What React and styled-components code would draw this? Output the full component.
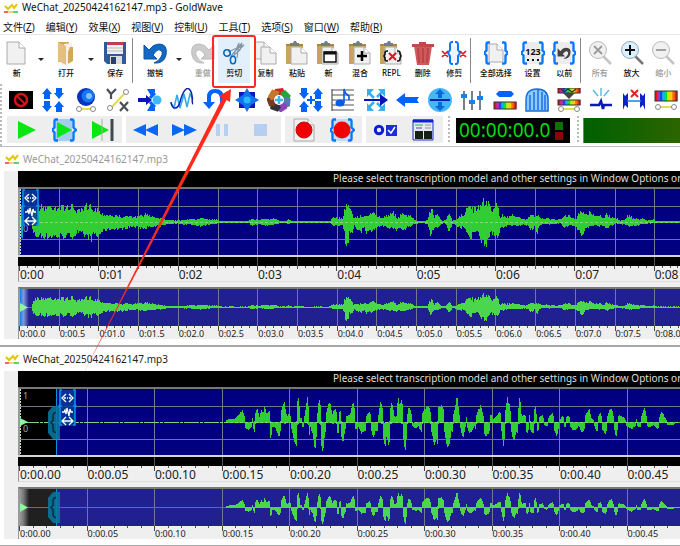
import React from "react";
import styled, { createGlobalStyle } from "styled-components";

const Global = createGlobalStyle`
  * { box-sizing: border-box; }
  body { margin: 0; background: #fff; overflow: hidden; }
  button { font: inherit; color: inherit; border: 0; padding: 0; background: none; }
  svg { display: block; flex: none; }
`;

const Page = styled.main`
  position: relative;
  overflow: hidden;
  font-family: "Noto Sans", "Noto Sans CJK SC", sans-serif;
  color: #111;
`;
const TitleBar = styled.header`
  display: flex;
  align-items: center;
  gap: 4px;
  height: 15px;
  padding-left: 4px;
  font-size: 10px;
  line-height: 15px;
  white-space: nowrap;
`;
const MenuBar = styled.nav`
  display: flex;
  align-items: center;
  gap: 11px;
  height: 20px;
  padding: 4px 3px 0;
  border-bottom: 1px solid #e6e6e6;
  font-size: 10px;
  line-height: 14px;
`;
const MenuItem = styled.button`
  white-space: nowrap;
`;
const MainTools = styled.div`
  display: flex;
  height: 49px;
  padding-top: 3px;
`;
const ToolGroup = styled.div`
  display: flex;
  flex: none;
  width: ${(p) => p.$width}px;
  padding-left: ${(p) => p.$inset || 0}px;
`;
const ToolButton = styled.button`
  display: flex;
  flex: 1 0 ${(p) => (p.$wide ? 10 : 0)}px;
  flex-direction: column;
  align-items: center;
  gap: 1px;
  height: 45px;
  padding-top: 3px;
  font-size: 8px;
  font-weight: 500;
  line-height: 13px;
  white-space: nowrap;
  color: ${(p) => (p.disabled ? "#999" : "#111")};
  background: ${(p) => (p.$active ? "#e3effa" : "transparent")};
`;
const DropArrow = styled.button`
  flex: none;
  display: flex;
  justify-content: center;
  align-items: center;
  width: 16px;
  height: 43px;
`;
const Divider = styled.span`
  flex: none;
  width: 1px;
  height: 45px;
  background: #888;
`;
const LowerTools = styled.div`
  padding-left: 5px;
  background: radial-gradient(circle at 1px 1px, #bbb 1px, transparent 1px) 0 0 / 4px 4px repeat-y;
`;
const EffectRow = styled.div`
  display: flex;
  height: 31px;
  margin-right: -2px;
`;
const IconButton = styled.button`
  flex: 1 0 0;
  display: flex;
  align-items: center;
  justify-content: center;
`;
const TransportRow = styled.div`
  display: flex;
  gap: 4px;
  height: 31px;
  padding: 1px 0 3px 2px;
`;
const TransportPanel = styled.div`
  flex: none;
  display: flex;
  width: ${(p) => p.$width}px;
  background: #eee;
`;
const Grip = styled.span`
  flex: none;
  width: 5px;
  margin-left: ${(p) => p.$gap}px;
  background: radial-gradient(circle at 1px 1px, #bbb 1px, transparent 1px) 1px 0 / 4px 4px repeat-y;
`;
const Lcd = styled.div`
  flex: none;
  display: flex;
  align-items: center;
  justify-content: space-between;
  width: 114px;
  height: 25px;
  margin-top: 2px;
  padding: 0 7px 0 3px;
  background: #000;
  color: #00dc14;
  font-size: 19px;
  line-height: 25px;
`;
const Lamps = styled.div`
  display: grid;
  gap: 2px;
`;
const Lamp = styled.span`
  width: 8px;
  height: 8px;
  background: ${(p) => p.$color};
`;
const Meter = styled.div`
  flex: 1;
  height: 25px;
  margin-top: 2px;
  margin-left: -2px;
  border-left: 1px solid #19c719;
  background: linear-gradient(90deg, #006000, #2c6500);
`;
const SoundWindow = styled.section`
  padding-bottom: 6px;
  border-top: ${(p) => p.$rule}px solid ${(p) => (p.$rule > 1 ? "#a6a6a6" : "#bcbcbc")};
`;
const WindowTitle = styled.h2`
  display: flex;
  align-items: center;
  gap: 4px;
  height: 24px;
  margin: 0;
  padding-left: 5px;
  font-size: 10px;
  font-weight: 400;
  line-height: 24px;
  color: ${(p) => (p.$dim ? "#999" : "#222")};
`;
const Tracks = styled.div`
  margin-left: 4px;
  padding-left: 14px;
  background: #efefef;
`;
const Transcript = styled.p`
  margin: 0;
  height: 16px;
  padding-left: 315px;
  overflow: hidden;
  background: #000;
  color: #ddd;
  font-size: 10px;
  line-height: 15px;
  white-space: nowrap;
`;
const Strip = styled.div`
  position: relative;
  border-top: 2px solid #777;
  border-left: 2px solid #999;
  background: #000;
  overflow: hidden;
`;
const Floating = styled.div`
  position: absolute;
  top: 0;
  left: 0;
`;
const WaveBase = styled.div`
  height: ${(p) => p.$height}px;
  border-top: 2px solid #d4d4d4;
  background: #000;
  overflow: hidden;
`;
const Ruler = styled.div`
  height: ${(p) => p.$height}px;
  overflow: hidden;
  border-left: 1px solid #999;
  border-bottom: ${(p) => (p.$small ? 0 : 1)}px solid #ddd;
`;
const RulerScale = styled.div`
  display: grid;
  grid-template-columns: repeat(${(p) => p.$count}, 1fr);
  width: calc(100% + ${(p) => p.$extra}px);
  font-size: ${(p) => (p.$small ? 9 : 12)}px;
  line-height: ${(p) => (p.$small ? 10 : 14)}px;
  color: #222;
`;
const RulerCell = styled.div`
  display: grid;
  grid-template-rows: 3px auto;
  height: ${(p) => (p.$small ? 13 : 16)}px;
  white-space: nowrap;
  background: linear-gradient(#444, #444) 0 0 / 1px 5px no-repeat;
`;
const TickRow = styled.span`
  display: grid;
  grid-template-columns: repeat(${(p) => p.$count}, 1fr);
`;
const Tick = styled.span`
  height: ${(p) => (p.$mid ? 3 : 2)}px;
  border-left: ${(p) => (p.$first ? 0 : 1)}px solid #555;
`;
const RulerLabel = styled.span`
  padding-left: 1px;
  margin-top: ${(p) => (p.$small ? 0 : -1)}px;
`;
const Spacer = styled.div`
  height: 5px;
`;
const BottomRule = styled.div`
  height: 2px;
  background: #aaa;
`;
const Annotation = styled.svg`
  position: absolute;
  top: 0;
  left: 0;
  pointer-events: none;
`;

const B = "#0879ff";
const Svg = ({ w = 24, h = 24, children, ...p }) => (
  <svg width={w} height={h} viewBox={`0 0 ${w} ${h}`} fill="none" aria-hidden="true" {...p}>{children}</svg>
);
const Logo = () => (
  <Svg w={14} h={10}>
    <path d="M1 3l3 3 4-4 2 3 3-4" stroke="#e3c600" strokeWidth="2" />
    <path d="M0 9h4" stroke="#e33" strokeWidth="1.5" /><path d="M4 9h5" stroke="#e8a020" strokeWidth="1" /><path d="M9 9h5" stroke="#2c3" strokeWidth="1.5" />
  </Svg>
);
const Sheet = ({ x = 2, y = 1, w = 18, h = 22 }) => (
  <>
    <path d={`M${x} ${y}h${w - 6}l6 6v${h - 6}h-${w}z`} fill="#f1f1f1" stroke="#aaa" />
    <path d={`M${x + w - 6} ${y}v6h6`} fill="#fff" stroke="#aaa" />
  </>
);
const Braces = ({ l = 4, r = 20 }) => (
  <g stroke={B} strokeWidth="2.4">
    <path d={`M${l + 2} 1.500h-2q-1.500 0-1.500 2v6l-2.500 2.500 2.500 2.500v6q0 2 1.500 2h2`} />
    <path d={`M${r - 2} 1.500h2q1.500 0 1.500 2v6l2.500 2.500-2.500 2.500v6q0 2-1.500 2h-2`} />
  </g>
);
const Clip = ({ children }) => (
  <>
    <path d="M1 3h17v20H1z" fill="#c9a45c" /><path d="M1 3h17v2H1z" fill="#b0843c" />
    <path d="M5 4V2h3l1-2h2l1 2h2v3H5z" fill="#777c82" />
    <Sheet x={6} y={6} w={16} h={17} />
    {children}
  </>
);
const Lens = ({ dim, children }) => (
  <>
    <path d="M15 15l8 8" stroke={dim ? "#c4c4c4" : "#777"} strokeWidth="2.500" />
    <circle cx="10" cy="9" r="8.500" fill={dim ? "#f0f0f0" : "#d9f0ff"} stroke={dim ? "#bbb" : "#96a8b4"} />
    {children}
  </>
);
const undoShape = "M1 4v14h13l-4-4q4-6 7-5 4 2 1 7-2 4-7 6 10 1 12-8Q25 3 16 3q-6 0-10 6z";
const mainIcons = {
  file: <Svg><Sheet x={2} /></Svg>,
  open: <Svg w={20}><path d="M2 1h11v20H2z" fill="#d6a454" /><path d="M8 3l8-1v19l-8 2z" fill="#f2f0e8" /><path d="M2 1l8 4v19l-8-4z" fill="#e5c078" /><path d="M14 6h3v14l-5 3V11z" fill="#d5a75b" /></Svg>,
  save: <Svg><path d="M1 1h22v22H4l-3-3z" fill="#315a9e" /><path d="M4 1h16v12H4z" fill="#edf1f5" /><path d="M4 1h16v3H4z" fill="#c13f49" /><path d="M4 7h16M4 10h16" stroke="#bbb" /><path d="M7 15h12v8H7z" fill="#ddd" /><path d="M8 16h5v7H8z" fill="#27416b" /></Svg>,
  undo: <Svg><path d={undoShape} fill="#1268c5" stroke="#10529a" /></Svg>,
  redo: <Svg><path d={undoShape} transform="matrix(-1 0 0 1 24 0)" fill="#ccc" stroke="#bbb" /></Svg>,
  cut: <Svg><path d="M9 15L20 2l-2 7-8 7zM15 17l2-15-5 11M6 11L22 4l-7 7" stroke="#8297a8" strokeWidth="1.200" /><circle cx="5" cy="12" r="3.200" stroke="#0a68b9" strokeWidth="1.600" /><ellipse cx="11" cy="19" rx="2.600" ry="3.800" stroke="#0a68b9" strokeWidth="1.600" /></Svg>,
  copy: <Svg><Sheet x={1} y={1} w={15} h={17} /><Sheet x={7} y={6} w={15} h={17} /></Svg>,
  paste: <Svg><Clip /></Svg>,
  pasteNew: <Svg><Clip><path d="M8 11h12v10H8z" fill="#fff" stroke="#111" strokeWidth="1.500" /><path d="M8 12h12" stroke="#111" strokeWidth="3" /></Clip></Svg>,
  mix: <Svg><Clip><path d="M9 15h10M14 10v10" stroke="#000" strokeWidth="2.500" /></Clip></Svg>,
  repl: <Svg><Clip><path d="M9 10H8q-2 0-2 2v1l-1 2 1 2v1q0 2 2 2h1M18 10h1q2 0 2 2v1l1 2-1 2v1q0 2-2 2h-1" stroke="#111" strokeWidth="1.600" /><path d="M10 12l7 7M17 12l-7 7" stroke="#d51920" strokeWidth="2" /></Clip></Svg>,
  trash: <Svg><path d="M3 5h18l-3 19H6z" fill="#cf5a5a" /><path d="M7 7l1 15M12 7v15M17 7l-1 15" stroke="#bd434a" strokeWidth="2" /><path d="M1 3h7V1h7v2h8v3H1z" fill="#c1484d" /></Svg>,
  trim: <Svg w={26}><path d="M10 5h6v15h-6z" fill="#eaf5ff" /><g stroke={B} strokeWidth="2"><path d="M12 1h-1q-2 0-2 3v5l-2 3 2 3v5q0 3 2 3h1M14 1h1q2 0 2 3v5l2 3-2 3v5q0 3-2 3h-1" /></g><path d="M1 10l6 6M7 10l-6 6M19 10l6 6M25 10l-6 6" stroke="#e01a1f" strokeWidth="1.700" /></Svg>,
  all: <Svg><Braces /><Sheet x={5} y={3} w={14} h={18} /></Svg>,
  numbers: <Svg><rect x="4" y="1" width="16" height="22" fill="#ececec" /><Braces /><text x="12" y="14" textAnchor="middle" fontFamily="Noto Sans" fontSize="9" fontWeight="700" fill="#111">123</text><path d="M6 19h2m3 0h2m3 0h2" stroke="#111" strokeWidth="2" /></Svg>,
  previous: <Svg><rect x="4" y="1" width="16" height="22" fill="#ececec" /><Braces /><path d={undoShape} transform="translate(5 5) scale(.58)" fill="#444" /></Svg>,
  zoomAll: <Svg><Lens dim><path d="M6 5l8 8M14 5l-8 8" stroke="#999" strokeWidth="1.800" /></Lens></Svg>,
  zoomIn: <Svg><Lens><path d="M5 9h10M10 4v10" stroke="#111" strokeWidth="2" /></Lens></Svg>,
  zoomOut: <Svg><Lens dim><path d="M5 9h10" stroke="#999" strokeWidth="1.800" /></Lens></Svg>,
};

const E = "#0064fa";
const arrowUp = "M5 0l5 6H8v5H2V6H0z";
const Arrow = ({ x, y, r = 0, c = E }) => <path d={arrowUp} fill={c} transform={`translate(${x} ${y}) rotate(${r} 5 5.500)`} />;
const Rainbow = ({ x = 1, y, w = 22, h = 7 }) => (
  <>{["#e11", "#a3c", "#24e", "#0bd", "#1d3", "#be0", "#fc0", "#f70", "#e22"].map((c, i) => <rect key={i} x={x + (i * w) / 9} y={y} width={w / 9 + 0.5} height={h} fill={c} />)}<rect x={x} y={y} width={w} height={h} stroke="#333" /></>
);
const Link = ({ y = 21, x1 = 4, x2 = 20 }) => (
  <><path d={`M${x1} ${y}H${x2}`} stroke="#e4dc52" strokeWidth="2" /><g fill="#fff" stroke="#888"><circle cx={x1} cy={y} r="2.500" /><circle cx={x2} cy={y} r="2.500" /></g></>
);
const effects = [
  ["Censor", <><path d="M0 3h24v18H0z" fill="#000" /><circle cx="12" cy="12" r="6" stroke="#d21313" strokeWidth="2.500" /><path d="M8 8l8 8" stroke="#d21313" strokeWidth="2" /></>],
  ["Stretch", <><Arrow x={1} y={0} /><Arrow x={13} y={0} r={180} /><Arrow x={1} y={13} r={180} /><Arrow x={13} y={13} /></>],
  ["Doppler", <><circle cx="12" cy="9" r="9" fill="#0632c0" /><circle cx="14" cy="8" r="6.500" fill="#1675f0" /><circle cx="15" cy="8" r="3" fill="#7dc3ff" /><Link x1={5} x2={19} /></>],
  ["Expression", <><path d="M5 20L19 5" stroke="#e4dc52" strokeWidth="2" /><g stroke="#4b5058" strokeWidth="2.200"><path d="M1 1l4 5 5-5M5 6v5M14 14l8 9M22 14l-8 9" /></g><g fill="#fff" stroke="#888"><circle cx="20" cy="4" r="2.500" /><circle cx="4" cy="20" r="2.500" /></g></>],
  ["Echo", <><circle cx="19" cy="12" r="4.500" fill="#3db8f8" /><path d="M12 10l5-5M12 14l5 5" stroke={E} strokeWidth="3" /><path d="M9 1h8v3l-4 4zM9 23h8v-3l-4-4z" fill={E} /><path d="M0 10h8V7l6 5-6 5v-3H0z" fill="#0b12bd" /></>],
  ["Flanger", <><path d="M1 15l3 5 3-13 3 13 4-14 3 13 3-13 3 5" stroke="#37a8f0" strokeWidth="1.600" /><path d="M1 14c1 8 7 8 9 0S16-3 20 2s1 13 3 14" stroke="#0922ad" strokeWidth="1.500" /></>],
  ["Reverse", <path d="M0 14h4V9q0-8 8-8 9 0 9 9v4q0 7-6 9 2-3 2-8v-4q0-6-5-6-4 0-4 5v4h4l-6 7z" fill={E} />],
  ["Mechanize", <><path d="M4 4h16v16H4z" fill="#0b18bf" /><path d="M12 0l4 7 8 5-8 5-4 7-4-7-8-5 8-5z" fill="#1171ee" /><circle cx="12" cy="12" r="3.500" fill="#29b9f4" /></>],
  ["Plug-ins", <>{["#d42226", "#24a637", "#5878b6", "#8a45b6", "#333", "#773a23", "#c67829"].map((c, i) => <path key={c} d="M8 1l8-1 3 7-6 3-6-4z" fill={c} transform={`rotate(${i * 51.4} 12 12)`} />)}<circle cx="12" cy="12" r="5" fill="#fff" /><path d="M12 8v8M8 12h8" stroke="#40b4ed" strokeWidth="2.500" /></>],
  ["Offset", <><Arrow x={0} y={0} r={180} /><Arrow x={14} y={0} /><Arrow x={0} y={13} /><Arrow x={14} y={13} r={180} /><path d="M8 12h8M12 8v8" stroke={E} strokeWidth="2" /></>],
  ["Pitch", <><path d="M1 2h22M1 7h22M1 12h22M1 17h22M1 22h22M1 1v22" stroke="#555" strokeWidth="1.200" /><ellipse cx="9" cy="15" rx="4.500" ry="3.500" fill="#075de9" /><path d="M13 15V1q1 5 5 7v4" stroke="#075de9" strokeWidth="1.600" /></>],
  ["Reverb", <><path d="M10 10L5 5m8 4l5-5m-8 10l-5 5m8-4l5 5" stroke="#38afee" strokeWidth="2.500" /><path d="M3 1h7L3 9zM21 1h-7l7 8zM3 23h7l-7-8zM21 23h-7l7-8z" fill="#38afee" /><path d="M0 11h16V6l8 6-8 6v-5H0z" fill="#0912bb" /></>],
  ["Backward", <path d="M0 12l9-7v4h14l-2 3 2 3H9v4z" fill={E} />],
  ["Dynamics", <><circle cx="12" cy="12" r="12" fill="#45b8f4" /><path d="M2 12h20" stroke="#0821aa" strokeWidth="2" /><path d="M12 1l5 5h-3v4h-4V6H7zM12 23l5-5h-3v-4h-4v4H7z" fill="#0568dd" /></>],
  ["Equalizer", <><path d="M4 3v19M12 3v19M20 3v19" stroke="#536371" strokeWidth="1.600" /><path d="M1 8h6M9 14h6M17 10h6" stroke="#1682eb" strokeWidth="4" /></>],
  ["Filter", <><path d="M3 6l3-3h12l3 3-3 3H6z" fill={E} /><Rainbow y={14} /></>],
  ["Gate", <><path d="M1 23V12Q1 1 13 1q11 0 11 11v11z" fill="#8ccaff" /><path d="M1 23V12Q1 1 12 1t11 11v11zM5 22V7m4 15V4m4 18V2m4 20V4m3 18V7" stroke="#1469df" strokeWidth="1.400" /></>],
  ["Spectrum filter", <><Rainbow y={0} h={5} /><path d="M4 1l3 3 4-3 4 3 4-3" stroke="#333" strokeWidth="1.200" /><path d="M6 5h12l-6 6z" fill="#444" /><Rainbow y={12} h={5} /><Link y={21} /></>],
  ["Pop click", <><path d="M4 2l5 6M12 0v8M20 2l-5 6" stroke="#51baf0" strokeWidth="1.400" /><path d="M1 17h9l2-4 2 8 1-4h8" stroke="#0819b6" strokeWidth="2.500" /></>],
  ["Silence reduction", <><path d="M1 5l2 3 3-3v15l-3-3-2 5zM23 5l-2 3-3-3v15l3-3 2 5z" fill="#1020d0" /><path d="M5 13h14" stroke="#1682eb" strokeWidth="1.500" /><path d="M9 2l7 7M16 2l-7 7" stroke="#e42121" strokeWidth="2" /></>],
  ["Spectrum shape", <><Rainbow y={3} h={10} /><Link y={19} /></>],
];
const green = "#0ae60f";
const transports = [
  [115, [
    ["Play", <path d="M4 3l18 9-18 9z" fill={green} />],
    ["Play selection", <><path d="M4 1h16v22H4z" fill="#a5cdf2" /><Braces l={4} r={20} /><path d="M5 4l15 8-15 8z" fill={green} /></>],
    ["Play to end", <><path d="M2 3l17 9-17 9z" fill={green} /><path d="M12 1v22" stroke="#9ab79a" /><path d="M22 1v22" stroke="#404850" strokeWidth="3" /></>],
  ]],
  [155, [
    ["Rewind", <path d="M13 6v12L0 12zM25 6v12l-13-6z" fill="#0867f5" />],
    ["Fast forward", <path d="M0 6v12l13-6zM12 6v12l13-6z" fill="#0867f5" />],
    ["Pause", <path d="M6 6h4v12H6zM14 6h4v12h-4z" fill="#b5cef2" />],
    ["Stop", <path d="M5 6h13v12H5z" fill="#b5cef2" />],
  ]],
  [77, [
    ["Record new", <><Sheet x={2} w={20} /><circle cx="12" cy="12" r="8" fill="#f00000" stroke="#c01010" /></>],
    ["Record selection", <><path d="M4 1h16v22H4z" fill="#bddcf7" /><Braces /><circle cx="12" cy="12" r="8.500" fill="#f00000" /></>],
  ]],
  [77, [
    ["Control properties", <><circle cx="6" cy="12" r="3.700" stroke="#0a1ed0" strokeWidth="3" /><path d="M13 7h11v11H13z" fill="#1a2ed8" /><path d="M15 12l3 3 4-6" stroke="#fff" strokeWidth="1.500" /></>],
    ["Visual settings", <><path d="M2 2h20v20H2z" fill="#e8e8f0" stroke="#2030d0" /><path d="M2 3h20" stroke="#1020d8" strokeWidth="3" /><path d="M4 13h8v8H4zM13 13h8v8h-8z" fill="#162116" /><path d="M4 7h8" stroke="#25b33d" /><path d="M5 10h6" stroke="#44d" /><path d="M14 7h6m-6 3h6" stroke="#999" /></>],
  ]],
];

const tools = {
  left: [["新", "file"], null, ["打开", "open"], null, ["保存", "save"]],
  undo: [["撤销", "undo"], null],
  edit: [["重做", "redo", true], ["剪切", "cut", false, true], ["复制", "copy"], ["粘贴", "paste"], ["新", "pasteNew"], ["混合", "mix"], ["REPL", "repl"], ["删除", "trash"], ["修剪", "trim"]],
  select: [["全部选择", "all"], ["设置", "numbers"], ["以前", "previous"]],
  zoom: [["所有", "zoomAll", true], ["放大", "zoomIn"], ["缩小", "zoomOut", true]],
};
const Tools = ({ items }) => items.map((item, i) => item ? (
  <ToolButton key={i} disabled={item[2]} $active={item[3]} $wide={item[0].length > 3 && item[1] === "all"}>{mainIcons[item[1]]}<span>{item[0]}</span></ToolButton>
) : <DropArrow key={i} aria-label="More"><Svg w={6} h={3}><path d="M0 0h6L3 3z" fill="#222" /></Svg></DropArrow>);

const longUp = "12 0 13 14 16 18 25 18 30 19 40 18 50 18 53 19 56 14 60 13 64 15 66 19 68 15 71 20 74 16 78 15 81 10 85 10 90 8 100 7 110 6 120 7 127 9 135 6 140 5 146 3 155 2 160 2 170 4 175 3 182 6 188 3 195 3 202 1 228 1 232 4 240 3 246 4 255 4 259 1 266 1 268 4 272 1 280 2 284 1 311 1 313 6 318 5 323 5 325 16 327 21 329 23 331 12 333 5 340 7 344 6 347 9 353 10 357 7 362 5 367 8 372 12 377 5 382 9 390 7 395 2 402 1 408 2 411 17 414 6 418 9 421 2 426 2 429 9 432 2 438 4 445 11 450 22 453 14 458 16 462 22 466 28 470 19 473 13 477 24 479 6 483 8 488 6 492 8 498 7 503 3 508 4 512 9 515 4 517 9 520 5 530 4 541 3 544 7 550 7 556 4 559 11 562 15 565 7 569 12 575 6 580 8 583 4 587 10 590 6 595 5 600 2 605 3 608 8 612 5 617 4 622 4 627 2 633 3 637 1 660 1";
const longDown = "12 0 13 14 16 17 30 18 45 17 54 17 57 12 60 14 66 17 71 20 74 14 78 18 81 12 90 8 100 9 110 6 120 7 127 7 135 6 140 5 146 3 155 2 170 3 182 5 188 3 202 1 228 1 232 4 240 3 246 4 255 3 259 1 266 1 268 3 272 1 311 1 313 4 323 4 325 13 326 27 327 29 329 15 331 16 334 5 341 11 344 5 347 13 353 9 362 4 367 8 372 7 377 9 382 9 390 5 395 2 402 1 408 2 411 16 415 5 418 7 421 2 426 2 429 11 432 2 438 5 445 8 450 20 453 10 458 13 462 22 466 25 470 16 473 12 477 18 480 8 488 4 498 5 503 3 508 4 512 11 515 3 517 13 520 3 541 2 544 6 550 4 556 5 559 10 562 18 565 7 575 4 580 5 583 4 587 7 595 2 605 3 608 5 617 4 627 2 637 1 660 1";
const shortUpA = "20 3 30 4 45 4 67 13 75 3 90 3 100 6 112 14 118 5 123 13 130 8 133 17 140 8 148 13 155 2 165 3 180 7 192 21 200 5 207 10 215 4 225 0 229 10 235 28 240 5 250 4 255 8 262 28 267 5 275 0 290 3 298 25 303 8 310 0 318 8 325 20 331 18 335 7 345 15 352 5 362 13 368 0 378 7 385 8 392 10 400 22 405 7 412 2 420 0 430 4 440 8 447 12 455 3 465 2 475 6 482 22 487 15 492 0 505 2 515 22 520 10 524 4 530 8 534 27 540 17 545 24 549 5 560 5 567 16 572 11 578 0 600 2 610 12 615 16 625 17 632 10 640 3 650 3 655 18";
const shortUpB = "0 18 8 18 13 3 18 0 35 2 45 15 50 29 55 12 60 0 75 2 80 6 90 3 105 2 112 11 122 18 128 8 135 0 148 2 153 9 158 3 170 7 180 11 187 0 195 8 201 26 208 18 213 3 225 0 232 2 239 27 244 6 255 8 262 5 270 8 278 2 285 16 290 6 300 6 306 8 312 2 322 2 330 8 337 10 345 0 355 5 360 3 368 7 375 2 382 8 392 3 400 0 410 4 420 0 430 3 438 8 446 15 453 5 460 2 470 4 480 10 487 2 500 4 507 12 514 16 520 5 530 3 537 8 550 6 560 0 585 2 590 4 600 2 608 10 614 15 620 3 630 5 640 0 655 4 665 11 672 6 680 1 720 1";
const shortDownA = "20 2 50 3 65 3 85 8 98 3 103 10 110 2 118 6 130 4 140 6 148 3 152 17 156 4 165 5 177 14 185 3 195 8 202 3 210 5 215 7 220 14 228 26 233 10 238 2 250 5 258 3 266 16 270 3 278 12 285 27 290 8 297 2 303 20 308 31 313 14 320 4 330 3 338 8 343 2 352 12 360 8 368 21 374 8 382 0 395 2 405 7 415 4 425 11 435 9 445 0 455 8 460 16 466 8 472 9 478 2 488 10 495 27 500 10 505 25 510 12 516 4 528 3 538 3 548 10 555 28 560 10 568 0 580 5 587 6 595 3 605 11 610 0 625 2 635 10 643 25 648 14 652 23 656 5";
const shortDownB = "0 3 10 3 16 15 22 27 28 22 33 8 38 10 42 0 55 0 62 6 69 17 75 5 80 3 88 11 95 9 103 3 108 8 113 0 128 2 136 14 145 12 152 2 165 4 175 3 184 7 190 24 196 5 205 2 215 10 222 20 228 9 235 13 240 2 252 2 262 12 267 3 275 11 281 11 288 0 293 9 300 3 310 2 318 4 328 3 335 2 343 8 350 15 356 3 368 5 377 5 385 2 398 8 408 7 415 3 427 11 435 5 445 0 460 0 470 10 478 3 488 8 496 12 502 3 515 0 522 5 528 16 533 4 545 2 558 3 565 5 575 7 585 3 600 5 608 1 622 4 630 5 640 2 652 7 660 3 680 2 695 3 705 1 720 0";
const pairs = (text, offset = 0, scale = 1) => {
  const n = text.split(" ").map(Number), out = [];
  for (let i = 0; i < n.length; i += 2) out.push([offset + n[i] / scale, n[i + 1]]);
  return out.sort((a, b) => a[0] - b[0]);
};
const valueAt = (points, x) => {
  const i = points.findIndex((p) => p[0] >= x);
  if (i < 1) return 0;
  const [a, b] = [points[i - 1], points[i]];
  return a[1] + ((b[1] - a[1]) * (x - a[0])) / (b[0] - a[0] || 1);
};
const peakAt = (points, x) =>
  Math.max(valueAt(points, x), valueAt(points, x + 0.34), valueAt(points, x + 0.67));
const wavePath = (up, down, rough, bipolar) => {
  let seed = 7;
  const rand = () => (seed = (seed * 16807) % 2147483647) / 2147483647;
  let d = "";
  for (let x = 0; x < 660; x++) {
    let a = peakAt(up, x), b = peakAt(down, x);
    if (bipolar && a > b) b *= 0.15;
    else if (bipolar) a *= 0.15;
    a *= 1 - rough * rand();
    b *= 1 - rough * rand();
    if (a + b > 0.4) d += `M${x} ${-a.toFixed(1)}h1V${b.toFixed(1)}h-1z`;
  }
  return d;
};
const longWave = wavePath(pairs(longUp), pairs(longDown), 0.4);
const shortWave = wavePath(
  [...pairs(shortUpA, 200, 3), ...pairs(shortUpB, 420, 3)],
  [...pairs(shortDownA, 200, 3), ...pairs(shortDownB, 420, 3)], 0.15, true);

const Wave = ({ second, small }) => {
  const h = small ? 37 : 66, mid = small ? 18 : 33;
  const step = second ? 67.5 : 39.7;
  const lines = Array.from({ length: second ? 9 : 16 }, (_, i) => Math.round((i + 1) * step) - 1);
  const id = `fade${second ? 2 : 1}`;
  return (
    <svg width="100%" height={h} viewBox={`0 0 660 ${h}`} preserveAspectRatio="none" shapeRendering="crispEdges" aria-hidden="true">
      <defs><linearGradient id={id}><stop stopColor={second ? "#999" : "#0784ed"} /><stop offset="0.4" stopColor={second ? "#777" : "#8797d8"} /><stop offset="1" stopColor={second ? "#202020" : "#202090"} /></linearGradient></defs>
      <rect width="660" height={h} fill={small ? "#202090" : "#000080"} />
      {second && <rect width="36" height={h} fill={small ? "#202020" : "#000"} />}
      {small && <rect width="9" height={h} fill={`url(#${id})`} />}
      {!small && <path d="M0 17.500h660M0 50.500h660" stroke="#73738c" />}
      <path d={lines.map((x) => `M${x + 0.5} 0v${h}`).join("")} stroke="#777790" />
      <path d={`M0 ${mid + 0.5}h${second ? 208 : 12}`} stroke={small ? "#289c32" : "#91bd91"} strokeDasharray={small ? "none" : "3 1"} />
      <g transform={`translate(0 ${mid + (second ? 0.5 : 0)}) scale(1 ${small ? 0.58 : 1})`}><path d={second ? shortWave : longWave} fill={small ? "#4bd64b" : "#32cd32"} /></g>
      {small ? <path d={`M${second ? 206 : 12} ${mid + 0.5}H660`} stroke="#4bd64b" /> : <path d={`M0 ${mid + 0.5}H660`} stroke="#80d780" strokeDasharray="3 2" />}
      {second && <path d={`M36.500 0v${h}`} stroke="#0794d5" />}
    </svg>
  );
};
const Handle = ({ x, y, h = 33 }) => (
  <g transform={`translate(${x} ${y})`}>
    <path d={`M5 0h7v${h}H5l-5-6V6z`} fill="#08769c" opacity=".9" />
    <path d={`M8 ${h / 2 - 10}q-3 0-3 4v4l-2 2 2 2v4q0 4 3 4`} stroke="#032b42" strokeWidth="1.500" fill="none" />
  </g>
);
const Markers = ({ second }) => {
  const x = second ? 39 : 2;
  return (
    <Svg w={90} h={66}>
      <path d="M.5 0v66" stroke="#bde5c8" strokeDasharray="2 1" />
      <text x="3" y="10" fontFamily="Noto Sans" fontSize="9" fill="#aaa">1</text>
      <text x="3" y="43" fontFamily="Noto Sans" fontSize="9" fill="#aaa">0</text>
      <path d="M0 29l8 4-8 4z" fill="#90f59b" />
      {second ? <Handle x={28} y={17} /> : <path d="M1 18l2-2v34l-2-2z" fill="#079ed6" />}
      <rect x={x} y="1" width="16" height="36" rx="2" fill="#053b9c" opacity=".85" />
      <path d={`M${x + 3} 1h-2v14l-1 2 1 2v17h2M${x + 14} 1h2v14l1 2-1 2v17h-2M${x + 1} 17h2M${x + 14} 17h2`} stroke="#0596f0" strokeWidth="1.500" />
      <g stroke="#fff" strokeWidth="1.300"><path d={`M${x + 7} 5l-4 4 4 4M${x + 10} 5l4 4-4 4M${x + 5} 9h2m1 0h1m1 0h2`} /><path d={`M${x + 7} 28l-4 4 4 4M${x + 10} 28l4 4-4 4M${x + 3} 32h11`} /><path d={`M${x + 3} 23h2l1-2 1 4 1-6 2 8 1-7 1 3h2`} /></g>
    </Svg>
  );
};

const TimeRuler = ({ labels, extra, small, ticks, height }) => (
  <Ruler $small={small} $height={height}>
    <RulerScale $count={labels.length} $extra={extra} $small={small}>
      {labels.map((label) => (
        <RulerCell key={label} $small={small}>
          <TickRow $count={ticks}>{Array.from({ length: ticks }, (_, i) => <Tick key={i} $first={i === 0} $mid={i * 2 === ticks} />)}</TickRow>
          <RulerLabel $small={small}>{label}</RulerLabel>
        </RulerCell>
      ))}
    </RulerScale>
  </Ruler>
);
const Sound = ({ second }) => {
  const fine = Array.from({ length: 10 }, (_, i) => `0:00.${String(i * 5).padStart(2, "0")}`);
  const seconds = Array.from({ length: 9 }, (_, i) => `0:0${i}`);
  const halves = Array.from({ length: 17 }, (_, i) => `0:0${(i / 2).toFixed(1)}`);
  return (
    <SoundWindow $rule={second ? 2 : 1}>
      <WindowTitle $dim={!second}><Logo />WeChat_20250424162147.mp3</WindowTitle>
      <Tracks>
        <Transcript>Please select transcription model and other settings in Window Options or</Transcript>
        <Strip><Wave second={second} /><Floating><Markers second={second} /></Floating></Strip>
        <WaveBase $height={11}>
          <svg width="100%" height="9" viewBox="0 0 662 9" preserveAspectRatio="none" shapeRendering="crispEdges" aria-hidden="true">
            <path d={Array.from({ length: second ? 9 : 16 }, (_, i) => `M${Math.round((i + 1) * (second ? 67.5 : 39.7)) + 1.5} 0v9`).join("")} stroke="#555" />
          </svg>
        </WaveBase>
        <TimeRuler labels={second ? fine : seconds} extra={second ? 14 : 53} ticks={second ? 5 : 10} height={16} />
        <Spacer />
        <Strip>
          <Wave second={second} small />
          <Floating><Svg w={60} h={37}><path d="M0 14l8 4.500-8 4.500z" fill="#90f59b" />{second && <Handle x={28} y={3} h={31} />}</Svg></Floating>
        </Strip>
        <TimeRuler small labels={second ? fine : halves} extra={14} ticks={5} height={13} />
      </Tracks>
    </SoundWindow>
  );
};

const menus = [["文件", "Z"], ["编辑", "Y"], ["效果", "X"], ["视图", "V"], ["控制", "U"], ["工具", "T"], ["选项", "S"], ["窗口", "W"], ["帮助", "R"]];

export default function App() {
  return (
    <Page>
      <Global />
      <TitleBar><Logo /><span>WeChat_20250424162147.mp3 - GoldWave</span></TitleBar>
      <MenuBar>{menus.map(([name, key]) => <MenuItem key={key}>{name}(<u>{key}</u>)</MenuItem>)}</MenuBar>
      <MainTools>
        <ToolGroup $width={132}><Tools items={tools.left} /></ToolGroup>
        <Divider />
        <ToolGroup $width={54} $inset={6}><Tools items={tools.undo} /></ToolGroup>
        <ToolGroup $width={283}><Tools items={tools.edit} /></ToolGroup>
        <Divider />
        <ToolGroup $width={109} $inset={4}><Tools items={tools.select} /></ToolGroup>
        <Divider />
        <ToolGroup $width={98} $inset={3}><Tools items={tools.zoom} /></ToolGroup>
      </MainTools>
      <LowerTools>
        <EffectRow>{effects.map(([name, art]) => <IconButton key={name} aria-label={name}><Svg>{art}</Svg></IconButton>)}</EffectRow>
        <TransportRow>
          {transports.map(([width, items], i) => (
            <TransportPanel key={i} $width={width}>{items.map(([name, art]) => <IconButton key={name} aria-label={name}><Svg w={25}>{art}</Svg></IconButton>)}</TransportPanel>
          ))}
          <Grip $gap={0} />
          <Lcd><span>00:00:00.0</span><Lamps><Lamp $color="#087408" /><Lamp $color="#850808" /></Lamps></Lcd>
          <Grip $gap={2} />
          <Meter />
        </TransportRow>
      </LowerTools>
      <Sound />
      <Sound second />
      <BottomRule />
      <Annotation width="260" height="390" viewBox="0 0 260 390" fill="none" aria-hidden="true">
        <defs><linearGradient id="trail" x1="0" y1="1" x2="0" y2="0"><stop stopColor="#ff2a1c" stopOpacity=".1" /><stop offset=".15" stopColor="#ff2a1c" stopOpacity=".8" /><stop offset=".4" stopColor="#ff2a1c" /></linearGradient></defs>
        <rect x="213" y="36" width="42" height="51" rx="2" stroke="#fa2922" strokeWidth="2" />
        <path d="M77 386L223 97l4 2z" fill="url(#trail)" />
        <path d="M231 89l-12 7 11 6z" fill="#ff2a1c" />
      </Annotation>
    </Page>
  );
}
